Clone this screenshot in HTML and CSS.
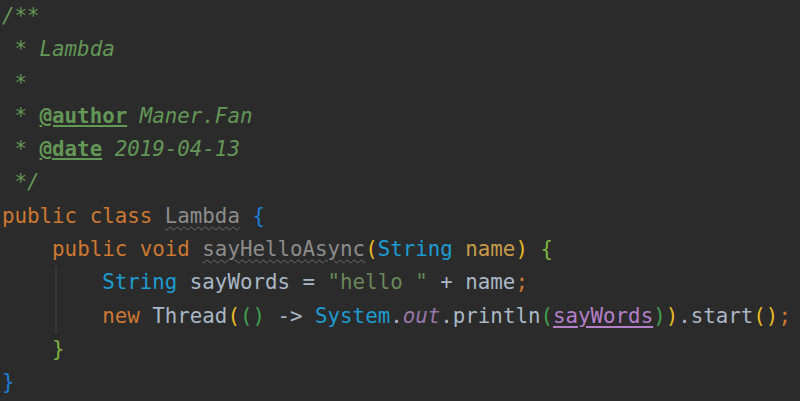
FILE: index.html
```html
<!DOCTYPE html>
<html>
<head>
<meta charset="utf-8">
<link rel="stylesheet" href="styles.css">
</head>
<body>
<pre class="code"><div class="line"><span class="cm">/**</span></div><div class="line"><span class="cm"> * Lambda</span></div><div class="line"><span class="cm"> *</span></div><div class="line"><span class="cm"> * <span class="tag">@author</span> Maner.Fan</span></div><div class="line"><span class="cm"> * <span class="tag">@date</span> 2019-04-13</span></div><div class="line"><span class="cm"> */</span></div><div class="line"><span class="kw">public class </span><span class="unused">Lambda</span> <span class="b1">{</span></div><div class="line">    <span class="kw">public void </span><span class="unused">sayHelloAsync</span><span class="p1">(</span><span class="ty">String</span> <span class="param">name</span><span class="p1">)</span> <span class="b2">{</span></div><div class="line guided">        <span class="ty">String</span> <span class="id">sayWords = </span><span class="str">"hello "</span><span class="id"> + name</span><span class="kw">;</span></div><div class="line guided">        <span class="kw">new </span><span class="id">Thread</span><span class="p1">(</span><span class="p2">()</span><span class="id"> -&gt; </span><span class="ty">System</span><span class="id">.</span><span class="st">out</span><span class="id">.println</span><span class="p2">(</span><span class="cap">sayWords</span><span class="p2">)</span><span class="p1">)</span><span class="id">.start</span><span class="p1">()</span><span class="kw">;</span></div><div class="line">    <span class="b2">}</span></div><div class="line"><span class="b1">}</span></div></pre>
</body>
</html>
```
FILE: styles.css
```css
html, body {
  margin: 0;
  padding: 0;
  background: #2b2b2b;
  height: 100%;
  overflow: hidden;
}
.code {
  margin: 0;
  padding: 0 0 0 2px;
  font-family: "DejaVu Sans Mono", monospace;
  font-size: 20.8px;
  line-height: 33.3px;
  color: #a9b7c6;
}
.line {
  height: 33.3px;
  white-space: pre;
}
.guided {
  background: linear-gradient(#363636, #363636) no-repeat 53px 0 / 2px 100%;
}
.cm { color: #629755; font-style: italic; }
.tag { font-weight: bold; text-decoration: underline; font-style: normal; text-underline-offset: 2px; }
.kw { color: #cc7832; }
.unused { color: #8c8c8c; text-decoration: underline wavy #6b6b6b; text-decoration-thickness: 1px; text-underline-offset: 3px; }
.b1 { color: #1b7ed8; }
.b2 { color: #7cb342; }
.p1 { color: #e8ba26; }
.p2 { color: #3fa04e; }
.ty { color: #1d9bd1; }
.param { color: #c99b4a; }
.id { color: #a9b7c6; }
.str { color: #6a8759; }
.st { color: #9876aa; font-style: italic; }
.cap { color: #b47fc8; text-decoration: underline; text-underline-offset: 3px; }
```
